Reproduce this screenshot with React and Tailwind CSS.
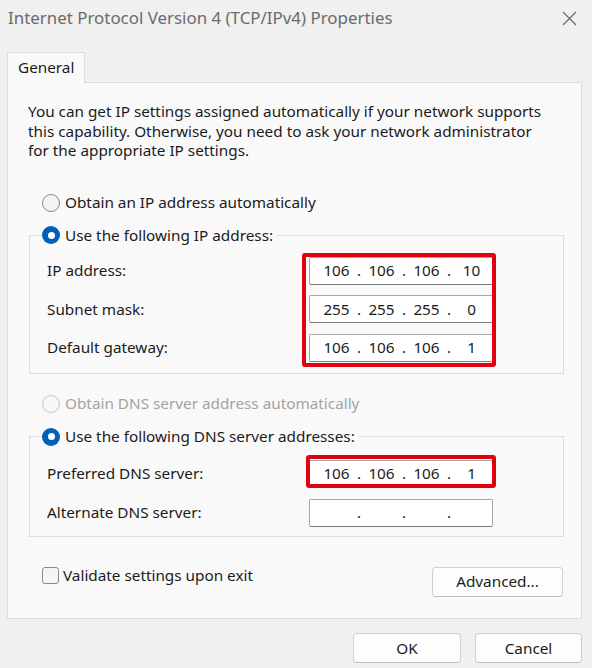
import React from 'react';

const FONT = { fontFamily: '"Noto Sans", "Open Sans", sans-serif' };

const Radio = ({ checked, disabled }) => {
  if (checked) {
    return (
      <span className="flex h-[18px] w-[18px] shrink-0 items-center justify-center rounded-full bg-[#005fb8]">
        <span className="h-[7px] w-[7px] rounded-full bg-white" />
      </span>
    );
  }
  return (
    <span
      className={
        disabled
          ? 'h-[18px] w-[18px] shrink-0 rounded-full border border-[#c8c8c8] bg-[#f7f7f7]'
          : 'h-[18px] w-[18px] shrink-0 rounded-full border border-[#8a8a8a] bg-[#f3f3f3]'
      }
    />
  );
};

const IpBox = ({ parts }) => (
  <div className="flex h-[28px] w-[184px] items-center rounded-[2px] border border-[#a8a8a8] border-b-[#7a7a7a] bg-white pl-[9.5px] text-[15.3px] text-[#1b1b1b]">
    {parts.map((p, i) => (
      <React.Fragment key={i}>
        <span className="w-[34px] text-center">{p}</span>
        {i < 3 && <span className="w-[11px] text-center">.</span>}
      </React.Fragment>
    ))}
  </div>
);

const Row = ({ label, parts }) => (
  <div className="flex h-[28px] items-center">
    <span className="w-[262px]">{label}</span>
    <IpBox parts={parts} />
  </div>
);

const Button = ({ children, className }) => (
  <button className={`flex h-[30px] items-center justify-center rounded-[4px] border border-[#d0d0d0] border-b-[#bdbdbd] bg-[#fdfdfd] text-[15.3px] text-[#1b1b1b] ${className}`}>
    {children}
  </button>
);

export default function App() {
  return (
    <div className="flex h-[668px] w-[592px] flex-col bg-[#f0f0f0] text-[15.3px] text-[#1b1b1b]" style={FONT}>
      {/* title bar */}
      <div className="flex h-[36px] items-center justify-between pl-[8px] pr-[15px]">
        <span className="text-[16.9px] text-[#6b6b6b]">Internet Protocol Version 4 (TCP/IPv4) Properties</span>
        <svg width="15" height="15" viewBox="0 0 15 15" fill="none" stroke="#6b6b6b" strokeWidth="1.2">
          <path d="M1 1 L14 14 M14 1 L1 14" />
        </svg>
      </div>

      {/* tab strip */}
      <div className="mt-[16px] pl-[7px]">
        <div className="relative z-10 -mb-px flex h-[31px] w-[78px] items-center border border-b-0 border-[#dcdcdc] bg-[#f9f9f9] pb-[2px] pl-[10px]">
          General
        </div>
      </div>

      {/* tab panel */}
      <div className="ml-[7px] flex h-[537px] w-[575px] flex-col border border-[#dcdcdc] bg-[#f9f9f9]">
        <p className="whitespace-nowrap pl-[20px] pt-[19px] leading-[19.5px]">
          You can get IP settings assigned automatically if your network supports
          <br />
          this capability. Otherwise, you need to ask your network administrator
          <br />
          for the appropriate IP settings.
        </p>

        <div className="mt-[32px] flex h-[20px] items-center gap-[5px] pl-[34px]">
          <Radio />
          <span>Obtain an IP address automatically</span>
        </div>

        <fieldset className="ml-[21px] mt-[12.5px] w-[535px] border border-[#dcdcdc] pb-[11px] pt-[11.5px]">
          <legend className="ml-[12px] flex h-[20px] items-center gap-[5px] pr-[4px]">
            <Radio checked />
            <span>Use the following IP address:</span>
          </legend>
          <div className="relative flex flex-col gap-[10.5px] pl-[17px]">
            <Row label="IP address:" parts={['106', '106', '106', '10']} />
            <Row label="Subnet mask:" parts={['255', '255', '255', '0']} />
            <Row label="Default gateway:" parts={['106', '106', '106', '1']} />
            <div className="absolute bottom-[-5px] left-[272px] top-[-4px] w-[194px] rounded-[3px] border-[4px] border-[#e3000f]" />
          </div>
        </fieldset>

        <div className="mt-[20px] flex h-[20px] items-center gap-[5px] pl-[34px] text-[#a3a3a3]">
          <Radio disabled />
          <span>Obtain DNS server address automatically</span>
        </div>

        <fieldset className="ml-[21px] mt-[13px] w-[535px] border border-[#dcdcdc] pb-[9px] pt-[13px]">
          <legend className="ml-[12px] flex h-[20px] items-center gap-[5px] pr-[4px]">
            <Radio checked />
            <span>Use the following DNS server addresses:</span>
          </legend>
          <div className="relative flex flex-col gap-[11px] pl-[17px]">
            <Row label="Preferred DNS server:" parts={['106', '106', '106', '1']} />
            <Row label="Alternate DNS server:" parts={['', '', '', '']} />
            <div className="absolute left-[276px] top-[-5px] h-[33px] w-[190px] rounded-[3px] border-[4px] border-[#e3000f]" />
          </div>
        </fieldset>

        <div className="mt-[30px] flex items-start justify-between pl-[34px] pr-[18px]">
          <div className="flex h-[18px] items-center gap-[4px]">
            <span className="h-[17px] w-[17px] shrink-0 rounded-[3px] border border-[#8a8a8a] bg-[#f5f5f5]" />
            <span>Validate settings upon exit</span>
          </div>
          <Button className="w-[131px]">Advanced...</Button>
        </div>
      </div>

      {/* dialog buttons */}
      <div className="mt-[14px] flex justify-end gap-[14px] pr-[10px]">
        <Button className="w-[108px]">OK</Button>
        <Button className="w-[107px]">Cancel</Button>
      </div>
    </div>
  );
}
